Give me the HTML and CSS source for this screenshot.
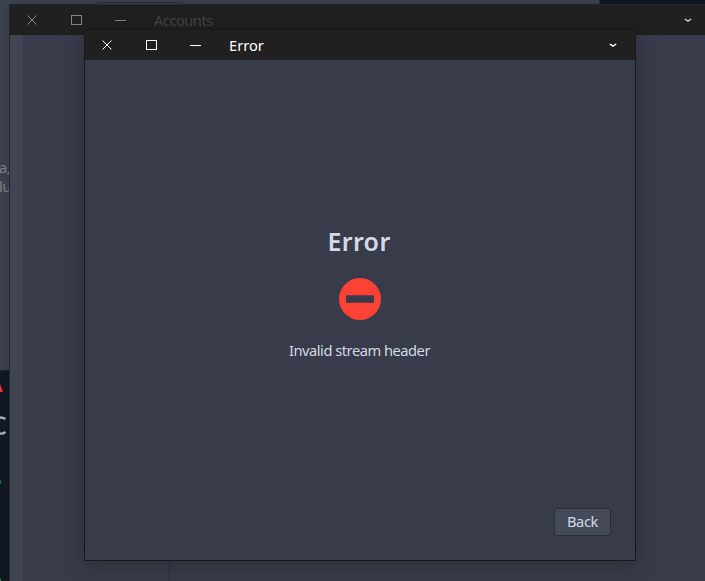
FILE: index.html
```html
<!DOCTYPE html>
<html lang="en">
<head>
<meta charset="utf-8">
<title>Error</title>
<link rel="stylesheet" href="styles.css">
</head>
<body>
<main class="desktop">
  <div class="backdrop">
    <div class="backdrop-tab"></div>
    <div class="backdrop-text">a,<br>lu</div>
  </div>
  <div class="terminal terminal-top"></div>
  <div class="terminal terminal-left">
    <svg width="9" height="211" viewBox="0 0 9 211">
      <path d="M0 13 3 21H0z" fill="#ed3532"/>
      <path d="M0 46.500Q3 46.500 5.500 48M0 62.500Q3 63 5.500 61" fill="none" stroke="#a8b4c8" stroke-width="2.400"/>
      <path d="M0 109.500h1v3H0zM0 207.500h1v3H0z" fill="#23813b"/>
    </svg>
  </div>

  <section class="window accounts">
    <header class="titlebar">
      <svg class="controls" width="100" height="12" viewBox="0 0 100 12" fill="none" stroke="currentColor" shape-rendering="crispEdges">
        <path d="M.5 1.500l9 9M9.500 1.500l-9 9" shape-rendering="auto"/>
        <path d="M44.500 1.500h10v9h-10zM88 6.500h11"/>
      </svg>
      <span class="title">Accounts</span>
      <svg class="chevron" width="8" height="5" viewBox="0 0 8 5"><path d="M.8 1 4 3.200 7.200 1" fill="none" stroke="currentColor" stroke-width="1.500"/></svg>
    </header>
    <div class="accounts-body">
      <div class="gutter"></div>
      <div class="sidebar"></div>
      <div class="pane"></div>
    </div>
  </section>

  <section class="window dialog">
    <header class="titlebar">
      <svg class="controls" width="100" height="12" viewBox="0 0 100 12" fill="none" stroke="currentColor" shape-rendering="crispEdges">
        <path d="M.5 1.500l9 9M9.500 1.500l-9 9" shape-rendering="auto"/>
        <path d="M44.500 1.500h10v9h-10zM88 6.500h11"/>
      </svg>
      <span class="title">Error</span>
      <svg class="chevron" width="8" height="5" viewBox="0 0 8 5"><path d="M.8 1 4 3.200 7.200 1" fill="none" stroke="currentColor" stroke-width="1.500"/></svg>
    </header>
    <div class="message">
      <h1>Error</h1>
      <svg class="error-icon" width="42" height="42" viewBox="0 0 42 42"><path fill="#ff4136" fill-rule="evenodd" d="M21 0a21 21 0 1 1 0 42a21 21 0 0 1 0-42zM7 17.300v7.400h28v-7.400z"/></svg>
      <p>Invalid stream header</p>
    </div>
    <footer><button>Back</button></footer>
  </section>
</main>
</body>
</html>
```

FILE: styles.css
```css
* { box-sizing: border-box; }
body {
  margin: 0;
  font: 14.667px/20px "Noto Sans", sans-serif;
  color: #d3dae3;
}
.desktop {
  position: relative;
  width: 705px;
  height: 581px;
  overflow: hidden;
  background: #3b404d;
}
.backdrop {
  position: absolute;
  inset: 0 auto auto 0;
  width: 600px;
  height: 371px;
  background: #3d424f;
  border-right: 1px solid #262a33;
  border-bottom: 1px solid #202329;
}
.backdrop-tab {
  position: absolute;
  left: 95px;
  top: 2px;
  width: 89px;
  height: 10px;
  border: 1px solid #2b2e39;
  border-radius: 3px;
}
.backdrop-text {
  position: absolute;
  left: -1px;
  top: 158px;
  line-height: 19px;
  letter-spacing: -.45px;
  color: #80838b;
}
.terminal { position: absolute; background: #121a25; }
.terminal-top { left: 600px; top: 0; width: 105px; height: 8px; }
.terminal-left { left: 0; top: 371px; width: 9px; height: 210px; }
.terminal-left svg { display: block; }

.window {
  position: absolute;
  display: flex;
  flex-direction: column;
  border: 1px solid #17181a;
  background: #383c4a;
}
.accounts {
  left: 9px;
  top: 4px;
  width: 720px;
  height: 600px;
  border-color: #25272a;
  box-shadow: 0 2px 10px rgba(0, 0, 0, .22);
}
.dialog {
  left: 84px;
  top: 29px;
  width: 552px;
  height: 532px;
  box-shadow: 0 3px 20px rgba(0, 0, 0, .28);
}
.titlebar {
  display: flex;
  align-items: center;
  flex: none;
  height: 30px;
  padding: 0 18px 0 17px;
  background: #202020;
  color: #fff;
}
.controls { flex: none; margin-right: 27px; }
.chevron { margin-left: auto; }
.accounts .titlebar { padding-right: 36px; color: #858585; }
.accounts .title { color: #454545; letter-spacing: -.5px; }
.accounts .chevron { color: #c8c8c8; }
.accounts-body { display: flex; flex: 1; }
.gutter { width: 13px; background: #404551; }
.sidebar { width: 147px; border-right: 1px solid #2c303b; }
.pane { flex: 1; }

.message {
  display: flex;
  flex: 1;
  flex-direction: column;
  align-items: center;
  padding-top: 164px;
}
h1 {
  margin: 0;
  padding-right: 2px;
  font-size: 25px;
  line-height: 34px;
  font-weight: 600;
  letter-spacing: .35px;
}
.error-icon { margin: 20px 0; }
p { margin: 0; padding-right: 1px; letter-spacing: -.48px; }
footer { display: flex; justify-content: flex-end; padding: 0 24px 24px; }
button {
  width: 57px;
  height: 28px;
  padding: 0 0 2px;
  border: 1px solid #2b2e39;
  border-radius: 3px;
  background: #444a58;
  color: inherit;
  font: inherit;
  letter-spacing: -.4px;
}
```
